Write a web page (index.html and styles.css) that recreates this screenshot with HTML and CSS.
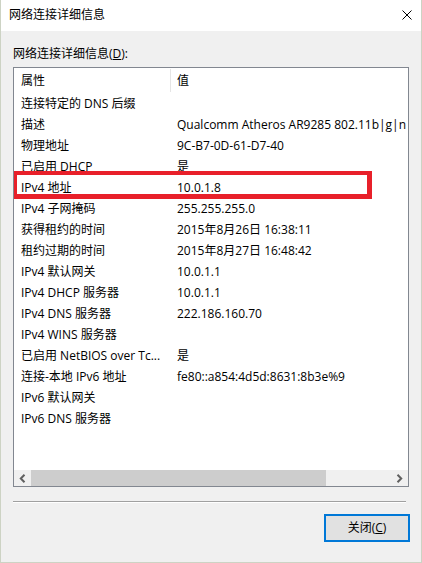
FILE: index.html
```html
<!DOCTYPE html>
<html lang="zh-CN">
<head>
<meta charset="utf-8">
<title>网络连接详细信息</title>
<link rel="stylesheet" href="styles.css">
</head>
<body>
<div class="window">
  <div class="titlebar">
    <span class="title">网络连接详细信息</span>
    <svg class="close" width="10" height="10" viewBox="0 0 10 10"><path d="M0.5 0.5 L9.5 9.5 M9.5 0.5 L0.5 9.5" stroke="#000" stroke-width="1" fill="none"/></svg>
  </div>
  <div class="content">
    <div class="label">网络连接详细信息(<span class="u">D</span>):</div>
    <div class="list">
      <div class="header">
        <div class="cell c1">属性</div>
        <div class="divider"></div>
        <div class="cell c2">值</div>
      </div>
      <div class="rows">
        <div class="row"><div class="cell c1">连接特定的 DNS 后缀</div><div class="cell c2"></div></div>
        <div class="row"><div class="cell c1">描述</div><div class="cell c2">Qualcomm Atheros AR9285 802.11b|g|n</div></div>
        <div class="row"><div class="cell c1">物理地址</div><div class="cell c2">9C-B7-0D-61-D7-40</div></div>
        <div class="row"><div class="cell c1">已启用 DHCP</div><div class="cell c2">是</div></div>
        <div class="row"><div class="cell c1">IPv4 地址</div><div class="cell c2">10.0.1.8</div></div>
        <div class="row"><div class="cell c1">IPv4 子网掩码</div><div class="cell c2">255.255.255.0</div></div>
        <div class="row"><div class="cell c1">获得租约的时间</div><div class="cell c2">2015年8月26日 16:38:11</div></div>
        <div class="row"><div class="cell c1">租约过期的时间</div><div class="cell c2">2015年8月27日 16:48:42</div></div>
        <div class="row"><div class="cell c1">IPv4 默认网关</div><div class="cell c2">10.0.1.1</div></div>
        <div class="row"><div class="cell c1">IPv4 DHCP 服务器</div><div class="cell c2">10.0.1.1</div></div>
        <div class="row"><div class="cell c1">IPv4 DNS 服务器</div><div class="cell c2">222.186.160.70</div></div>
        <div class="row"><div class="cell c1">IPv4 WINS 服务器</div><div class="cell c2"></div></div>
        <div class="row"><div class="cell c1">已启用 NetBIOS over Tc...</div><div class="cell c2">是</div></div>
        <div class="row"><div class="cell c1">连接-本地 IPv6 地址</div><div class="cell c2">fe80::a854:4d5d:8631:8b3e%9</div></div>
        <div class="row"><div class="cell c1">IPv6 默认网关</div><div class="cell c2"></div></div>
        <div class="row"><div class="cell c1">IPv6 DNS 服务器</div><div class="cell c2"></div></div>
      </div>
      <div class="hscroll">
        <div class="sbtn"><svg width="7" height="9" viewBox="0 0 7 9"><path d="M5.5 0.8 L1.8 4.5 L5.5 8.2" stroke="#606060" stroke-width="2" fill="none"/></svg></div>
        <div class="thumb"></div>
        <div class="track"></div>
        <div class="sbtn"><svg width="7" height="9" viewBox="0 0 7 9"><path d="M1.5 0.8 L5.2 4.5 L1.5 8.2" stroke="#606060" stroke-width="2" fill="none"/></svg></div>
      </div>
      <div class="highlight"></div>
    </div>
    <div class="sep"></div>
    <div class="actions">
      <button class="btn">关闭(<span class="u">C</span>)</button>
    </div>
  </div>
</div>
</body>
</html>
```

FILE: styles.css
```css
* { box-sizing: border-box; }
html, body {
  margin: 0;
  padding: 0;
  width: 422px;
  height: 563px;
  overflow: hidden;
  background: #f0f0f0;
}
body {
  font-family: "Open Sans", "Noto Sans CJK SC", sans-serif;
  font-size: 12px;
  color: #000;
}
.window {
  width: 422px;
  height: 563px;
  border: 1px solid #cdd3c4;
  border-top: none;
  background: #f0f0f0;
  display: flex;
  flex-direction: column;
}
.titlebar {
  height: 31px;
  background: #fff;
  display: flex;
  align-items: center;
  justify-content: space-between;
  padding: 0 9px 0 8px;
}
.title {
  font-size: 12px;
  line-height: 16px;
  margin-top: -1px;
}
.close { display: block; margin-top: -1px; }
.content {
  flex: 1;
  padding: 15px 12px 0 12px;
  display: flex;
  flex-direction: column;
}
.label {
  line-height: 16px;
  height: 16px;
  margin-bottom: 5px;
}
.u { text-decoration: underline; text-underline-offset: 1px; }
.list {
  position: relative;
  height: 420px;
  background: #fff;
  border: 1px solid #828790;
  display: flex;
  flex-direction: column;
  overflow: hidden;
}
.header {
  height: 25px;
  display: flex;
  align-items: center;
  flex: none;
}
.header .c1 { width: 156px; padding-left: 7px; }
.divider {
  width: 1px;
  height: 23px;
  background: #e5e5e5;
}
.header .c2 { padding-left: 6px; }
.rows {
  flex: 1;
  display: flex;
  flex-direction: column;
}
.row {
  height: 21px;
  display: flex;
  align-items: center;
}
.cell {
  white-space: nowrap;
  overflow: hidden;
  line-height: 16px;
}
.row .c1 { width: 157px; padding-left: 7px; flex: none; }
.row .c2 { padding-left: 6px; flex: 1; }
.hscroll {
  height: 16px;
  flex: none;
  display: flex;
  background: #f0f0f0;
}
.sbtn {
  width: 17px;
  display: flex;
  align-items: center;
  justify-content: center;
}
.thumb {
  width: 295px;
  background: #cdcdcd;
}
.track { flex: 1; }
.highlight {
  position: absolute;
  left: -1px;
  top: 103px;
  width: 359px;
  height: 28px;
  border: 4px solid #e8202a;
  border-bottom-width: 5px;
  border-right-width: 5px;
}
.sep {
  margin-top: 14px;
  margin-right: 3px;
  height: 2px;
  border-top: 1px solid #a0a0a0;
  border-bottom: 1px solid #ffffff;
}
.actions {
  margin-top: 11px;
  display: flex;
  justify-content: flex-end;
  margin-right: -1px;
}
.btn {
  width: 86px;
  height: 28px;
  background: #e1e1e1;
  border: 2px solid #0078d7;
  font-family: "Open Sans", "Noto Sans CJK SC", sans-serif;
  font-size: 12px;
  color: #000;
  padding: 0;
  line-height: 16px;
}
```
